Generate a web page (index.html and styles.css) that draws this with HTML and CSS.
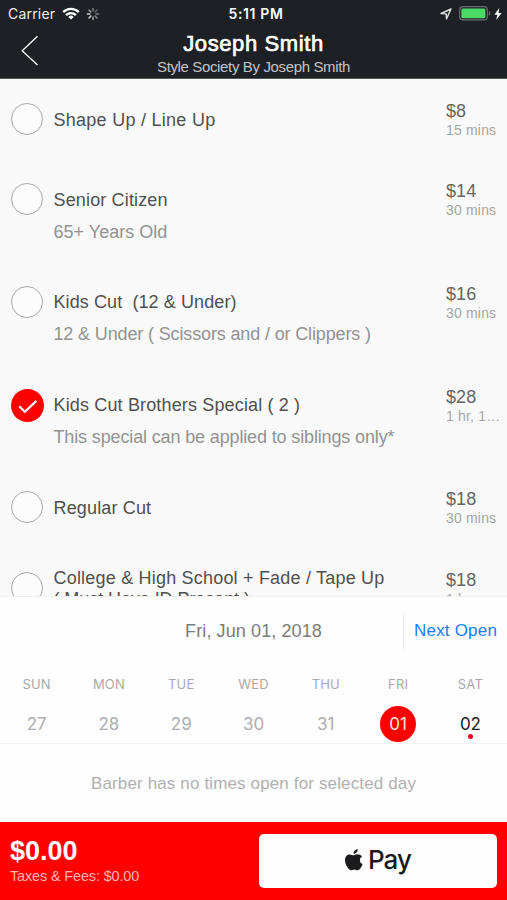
FILE: index.html
```html
<!DOCTYPE html>
<html lang="en">
<head>
<meta charset="utf-8">
<title>Book an appointment</title>
<link rel="stylesheet" href="styles.css">
</head>
<body>
<div class="app">
  <header class="header">
    <div class="status">
      <div class="status-left">
        <span class="carrier">Carrier</span>
        <svg class="wifi" width="18" height="13" viewBox="0 0 18 13" fill="none" stroke="#fff" stroke-width="2.3"><path d="M1.2 5.1a11 11 0 0 1 15.6 0M4.1 8.1a7 7 0 0 1 9.8 0"/><path d="M9 12.6 6.3 9.9a3.9 3.9 0 0 1 5.4 0z" fill="#fff" stroke="none"/></svg>
        <svg class="spinner" width="14" height="14" viewBox="-7 -7 14 14" stroke="#fff" stroke-width="1.4" stroke-linecap="round"><path d="M0-3v-2.600" opacity=".45"/><path d="M2.1-2.1 4-4" opacity=".35"/><path d="M3 0h2.600" opacity=".4"/><path d="M2.1 2.1 4 4" opacity=".5"/><path d="M0 3v2.600" opacity=".65"/><path d="M-2.1 2.1-4 4" opacity=".85"/><path d="M-3 0h-2.600" opacity=".8"/><path d="M-2.1-2.1-4-4" opacity=".6"/></svg>
      </div>
      <div class="time">5:11 PM</div>
      <div class="status-right">
        <svg width="12" height="12" viewBox="0 0 12 12" fill="none" stroke="#ddd" stroke-width="1.4" stroke-linejoin="round"><path d="M11 1 1 5.5l5.2.4.3 5z"/></svg>
        <svg class="battery" width="32" height="15" viewBox="0 0 32 15"><rect x=".7" y=".7" width="27.6" height="13.2" rx="3.2" fill="none" stroke="#6b6e71" stroke-width="1.2"/><rect x="2.4" y="2.5" width="24" height="9.8" rx="1.4" fill="#4cd964"/><path d="M29.8 5v4.8q1.6-.8 1.6-2.4T29.800 5z" fill="#6b6e71"/></svg>
        <svg width="8" height="12" viewBox="0 0 8 12" fill="#fff"><path d="M5.3 0 .4 6.700h2.900L2.200 12 7.600 4.900H4.500z"/></svg>
      </div>
    </div>
    <div class="nav">
      <svg class="back" width="18" height="32" viewBox="0 0 18 32" fill="none" stroke="#fff" stroke-width="1.3"><path d="M16.500 1.300 1.200 15.700 16.500 30"/></svg>
      <div class="titles">
        <h1>Joseph Smith</h1>
        <p>Style Society By Joseph Smith</p>
      </div>
    </div>
  </header>

  <main class="services">
    <div class="service">
      <span class="radio"></span>
      <div class="info"><div class="name n1">Shape Up / Line Up</div></div>
      <div class="cost"><div class="price">$8</div><div class="dur">15 mins</div></div>
    </div>
    <div class="service tall">
      <span class="radio"></span>
      <div class="info"><div class="name">Senior Citizen</div><div class="desc d2">65+ Years Old</div></div>
      <div class="cost"><div class="price">$14</div><div class="dur">30 mins</div></div>
    </div>
    <div class="service tall">
      <span class="radio"></span>
      <div class="info"><div class="name n3">Kids Cut&nbsp; (12 &amp; Under)</div><div class="desc">12 &amp; Under ( Scissors and / or Clippers )</div></div>
      <div class="cost"><div class="price">$16</div><div class="dur">30 mins</div></div>
    </div>
    <div class="service tall">
      <span class="radio checked"><svg width="34" height="34" viewBox="0 0 34 34" fill="none" stroke="#fff" stroke-width="2.3"><path d="m8.500 17.800 5.800 5.700L26.200 12.200"/></svg></span>
      <div class="info"><div class="name">Kids Cut Brothers Special ( 2 )</div><div class="desc">This special can be applied to siblings only*</div></div>
      <div class="cost"><div class="price">$28</div><div class="dur">1 hr, 1…</div></div>
    </div>
    <div class="service">
      <span class="radio"></span>
      <div class="info"><div class="name">Regular Cut</div></div>
      <div class="cost"><div class="price">$18</div><div class="dur">30 mins</div></div>
    </div>
    <div class="service">
      <span class="radio"></span>
      <div class="info"><div class="name n6"><div>College &amp; High School + Fade / Tape Up<br><span class="second">( Must Have ID Present )</span></div></div></div>
      <div class="cost"><div class="price">$18</div><div class="dur">1 hr</div></div>
    </div>
  </main>

  <section class="calendar">
    <div class="datebar">
      <div class="date">Fri, Jun 01, 2018</div>
      <div class="next">Next Open</div>
    </div>
    <div class="week">
      <div class="day"><span class="dow">SUN</span><span class="num">27</span></div>
      <div class="day"><span class="dow">MON</span><span class="num">28</span></div>
      <div class="day"><span class="dow">TUE</span><span class="num">29</span></div>
      <div class="day"><span class="dow">WED</span><span class="num">30</span></div>
      <div class="day"><span class="dow">THU</span><span class="num">31</span></div>
      <div class="day"><span class="dow">FRI</span><span class="num selected">01</span></div>
      <div class="day"><span class="dow">SAT</span><span class="num open">02</span></div>
    </div>
    <div class="empty">Barber has no times open for selected day</div>
  </section>

  <footer class="checkout">
    <div class="totals">
      <div class="total">$0.00</div>
      <div class="fees">Taxes &amp; Fees: $0.00</div>
    </div>
    <div class="pay">
      <svg width="18" height="22" viewBox="0 0 18 22" fill="#1b1b1d"><path d="M12.700 0c.2 1.400-.4 2.600-1.200 3.500-.8.900-1.900 1.400-2.900 1.300-.2-1.300.4-2.500 1.200-3.400C10.600.6 11.800.1 12.700 0z"/><path d="M17.100 7.500c-1.400.9-2.200 2.100-2.200 3.800 0 1.900 1.100 3.300 2.700 4-.4 1.200-1 2.400-1.800 3.500-.9 1.300-1.800 2.400-3.200 2.400-1.300 0-1.800-.8-3.300-.8s-2 .8-3.300.8c-1.300 0-2.200-1.100-3.200-2.500C.9 16.300 0 13.400 0 11.100c0-3.700 2.300-5.700 4.700-5.700 1.500 0 2.700.9 3.600.9.9 0 2.300-1 4-1 1.900 0 3.700.8 4.800 2.200z"/></svg>
      <span>Pay</span>
    </div>
  </footer>
</div>
</body>
</html>
```
FILE: styles.css
```css
* { box-sizing: border-box; }
body { margin: 0; font-family: "Liberation Sans", Arial, sans-serif; }
.app { width: 507px; height: 900px; overflow: hidden; display: flex; flex-direction: column; background: #fefefe; }

.header { height: 79px; flex: none; background: #1d2024; color: #fff; border-bottom: 1px solid #55575a; }
.status { height: 27px; display: grid; grid-template-columns: 1fr auto 1fr; align-items: center; padding: 0 5px 0 8px; font-family: Inter, sans-serif; }
.status-left { display: flex; align-items: center; }
.carrier { font-size: 14px; letter-spacing: .2px; color: #eee; }
.wifi { margin-left: 7px; }
.spinner { margin-left: 6px; }
.time { font-size: 14px; font-weight: 600; letter-spacing: .6px; padding-left: 2px; }
.status-right { display: flex; align-items: center; justify-content: flex-end; }
.battery { margin: 0 3px 0 7px; }
.nav { height: 51px; display: grid; grid-template-columns: 40px 1fr 40px; }
.back { margin: 8px 0 0 21px; }
.titles { text-align: center; }
h1 { margin: 5px 0 0; font-size: 22px; line-height: 24px; font-weight: 400; letter-spacing: .6px; -webkit-text-stroke: .7px #fff; }
.titles p { margin: 2px 0 0; font-size: 15px; line-height: 17px; color: #c3c4c6; letter-spacing: -.36px; }

.services { height: 518px; flex: none; overflow: hidden; background: #f9f9f9; border-bottom: 1px solid #f0f0f0; }
.service { display: flex; height: 80.3px; padding: 0 0 0 11px; }
.service.tall { height: 102.7px; }
.radio { width: 32px; height: 32px; flex: none; margin-top: 24px; border: 1.400px solid #a9a9a9; border-radius: 50%; background: #fcfcfc; }
.radio.checked { border: 0; background: #f00; width: 33px; height: 33px; margin-right: -1px; }
.radio svg { display: block; width: 33px; height: 33px; }
.info { flex: 1; margin-left: 10.500px; white-space: nowrap; }
.name { height: 80px; padding-top: 2px; display: flex; align-items: center; font-size: 18px; line-height: 21px; letter-spacing: .15px; color: #505050; }
.n1 { letter-spacing: .27px; }
.n3 { letter-spacing: .09px; }
.n6 { padding-top: 3px; letter-spacing: .2px; }
.second { letter-spacing: -.07px; }
.desc { margin-top: -18px; font-size: 18px; line-height: 20px; letter-spacing: -.14px; color: #939393; }
.d2 { letter-spacing: .02px; padding-top: 1px; }
.cost { width: 61px; padding-top: 21px; }
.price { font-size: 18px; line-height: 22px; letter-spacing: .1px; color: #666; }
.dur { font-size: 14px; line-height: 17px; letter-spacing: .18px; color: #a5a5a5; white-space: nowrap; }

.calendar { flex: 1; display: flex; flex-direction: column; }
.datebar { height: 67px; display: grid; grid-template-columns: 104px 1fr 104px; align-items: center; }
.date { grid-column: 2; padding-top: 2px; text-align: center; font-size: 18px; letter-spacing: .1px; color: #7c7c7c; }
.next { height: 36px; line-height: 36px; border-left: 1px solid #ececec; padding-left: 10px; font-size: 17px; letter-spacing: .2px; color: #147efb; white-space: nowrap; }
.week { height: 80px; display: grid; grid-template-columns: repeat(7, 72.300px); font-family: Inter, sans-serif; border-bottom: 1px solid #f2f2f2; }
.day { display: flex; flex-direction: column; align-items: center; padding-left: 1px; }
.dow { margin-top: 12px; font-size: 13px; line-height: 16px; letter-spacing: .2px; color: #a9a9ab; }
.num { position: relative; margin-top: 14px; width: 36px; height: 36px; line-height: 37px; text-align: center; font-size: 17px; color: #adadaf; }
.selected { border-radius: 50%; background: #f00; color: #ffe4e4; }
.open { color: #222; }
.open::after { content: ""; position: absolute; left: 16px; bottom: 3px; width: 5px; height: 5px; border-radius: 50%; background: #f00020; }
.empty { flex: 1; padding-top: 2px; display: flex; align-items: center; justify-content: center; font-size: 17px; letter-spacing: .14px; color: #b0b0b0; }

.checkout { height: 78px; flex: none; background: #f00; display: flex; padding: 12px 10px 12px 10px; }
.totals { flex: 1; color: #fff; }
.total { margin-top: 2px; font-size: 27px; line-height: 30px; font-weight: 700; }
.fees { margin-top: 2px; font-size: 14.500px; line-height: 17px; letter-spacing: -.16px; color: #ffb5b5; }
.pay { width: 238px; height: 54px; border-radius: 5px; background: #fefefe; display: flex; align-items: center; justify-content: center; gap: 5px; padding-bottom: 3px; font-family: Inter, sans-serif; font-size: 26px; font-weight: 500; letter-spacing: -1px; color: #1b1b1d; }
```
